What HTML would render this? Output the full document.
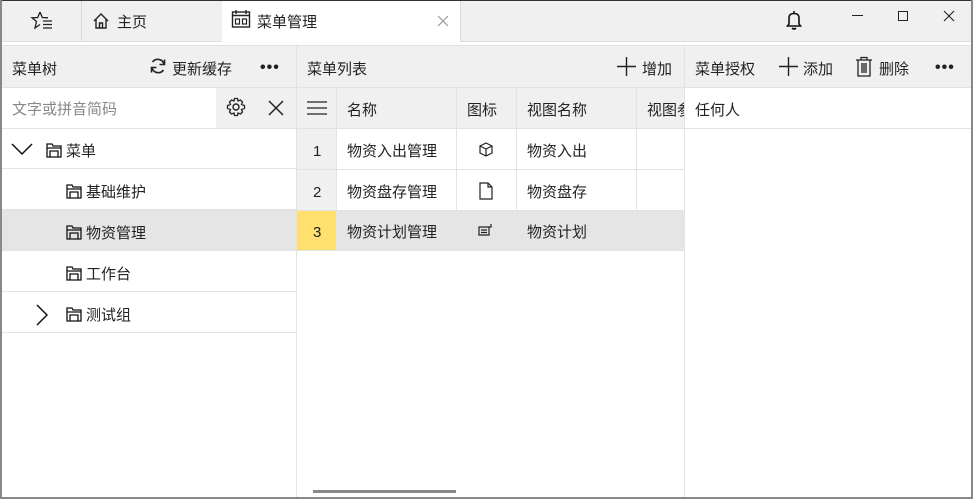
<!DOCTYPE html><html><head><meta charset="utf-8"><style>
*{box-sizing:border-box;margin:0;padding:0}
body{width:973px;height:499px;overflow:hidden;background:#fff;font-family:"Liberation Sans","Noto Sans CJK SC",sans-serif;font-size:15px;color:#222;position:relative}
.a{position:absolute}
.t{position:absolute;white-space:nowrap;line-height:20px;margin-top:2px}
.hl{position:absolute;height:1px;background:#e2e2e2}
.vl{position:absolute;width:1px;background:#e2e2e2}
</style></head><body>
<div class="a" style="left:0;top:0;width:973px;height:41px;background:#f0f0f0"></div>
<div class="a" style="left:0;top:0;width:973px;height:1px;background:#333"></div>
<div class="a" style="left:222px;top:1px;width:238px;height:41px;background:#fff"></div>
<div class="vl" style="left:81px;top:1px;height:40px;background:#d8d8d8"></div>
<div class="vl" style="left:460px;top:1px;height:40px;background:#d8d8d8"></div>
<div class="hl" style="left:0;top:41px;width:222px;background:#ddd"></div>
<div class="hl" style="left:460px;top:41px;width:513px;background:#ddd"></div>
<svg class="a" style="left:30px;top:10px" width="24" height="22" viewBox="0 0 24 22"><path d="M10 2 L12.3 7.5 L18 7.8 M10 2 L7.7 7.5 L2 7.8 L6.5 11.5 L5 18 L10 14.5" fill="none" stroke="#222" stroke-width="1.3"/><path d="M13 11h9M13 14.5h9M13 18h9" stroke="#222" stroke-width="1.3"/></svg>
<svg class="a" style="left:92px;top:12px" width="18" height="18" viewBox="0 0 18 18"><path d="M2 9 L9 2 L16 9 M4 7.5 V16 H14 V7.5 M7.5 16 V11 H10.5 V16" fill="none" stroke="#222" stroke-width="1.4"/></svg>
<div class="t" style="left:117px;top:11px">主页</div>
<svg class="a" style="left:231px;top:9px" width="20" height="20" viewBox="0 0 20 20"><rect x="1.5" y="3" width="17" height="15" fill="none" stroke="#222" stroke-width="1.4"/><path d="M1.5 6.5h17M5 1v4M15 1v4" stroke="#222" stroke-width="1.4"/><rect x="4.5" y="10" width="4" height="5" fill="none" stroke="#222" stroke-width="1.2"/><rect x="11.5" y="10" width="4" height="5" fill="none" stroke="#222" stroke-width="1.2"/></svg>
<div class="t" style="left:257px;top:11px">菜单管理</div>
<svg class="a" style="left:437px;top:15px" width="12" height="12"><path d="M1 1L11 11M11 1L1 11" stroke="#999" stroke-width="1.2"/></svg>
<svg class="a" style="left:785px;top:9px" width="18" height="22" viewBox="0 0 18 22"><path d="M9 2 V4 M4 15 V9 Q4 4.5 9 4.5 Q14 4.5 14 9 V15 L15.5 17 H2.5 L4 15 Z M7 19 Q9 21 11 19" fill="none" stroke="#111" stroke-width="1.6"/></svg>
<div class="a" style="left:852px;top:15px;width:11px;height:1px;background:#222"></div>
<div class="a" style="left:898px;top:11px;width:10px;height:10px;border:1px solid #222"></div>
<svg class="a" style="left:943px;top:10px" width="12" height="12"><path d="M1 1L11 11M11 1L1 11" stroke="#222" stroke-width="1.1"/></svg>
<div class="a" style="left:0;top:45px;width:973px;height:43px;background:#f0f0f0"></div>
<div class="hl" style="left:0;top:45px;width:973px"></div>
<div class="hl" style="left:0;top:87px;width:973px"></div>
<div class="t" style="left:12px;top:58px">菜单树</div>
<svg class="a" style="left:149px;top:57px" width="18" height="18" viewBox="0 0 18 18"><path d="M15 7 A6.5 6.5 0 0 0 3.5 5 M3 11 A6.5 6.5 0 0 0 14.5 13" fill="none" stroke="#222" stroke-width="1.6"/><path d="M15.5 2.5 V7.5 H10.5 M2.5 15.5 V10.5 H7.5" fill="none" stroke="#222" stroke-width="1.6"/></svg>
<div class="t" style="left:172px;top:58px">更新缓存</div>
<div class="t" style="left:260px;top:56px;font-size:16px;letter-spacing:1px;font-weight:bold">•••</div>
<div class="vl" style="left:296px;top:45px;height:454px"></div>
<div class="t" style="left:307px;top:58px">菜单列表</div>
<svg class="a" style="left:617px;top:57px" width="19" height="19"><path d="M9.5 0V19M0 9.5H19" stroke="#222" stroke-width="1.4"/></svg>
<div class="t" style="left:642px;top:58px">增加</div>
<div class="vl" style="left:684px;top:45px;height:454px"></div>
<div class="t" style="left:695px;top:58px">菜单授权</div>
<svg class="a" style="left:779px;top:57px" width="19" height="19"><path d="M9.5 0V19M0 9.5H19" stroke="#222" stroke-width="1.4"/></svg>
<div class="t" style="left:803px;top:58px">添加</div>
<svg class="a" style="left:855px;top:56px" width="18" height="21" viewBox="0 0 18 21"><path d="M1 4H17M6 4V1.5H12V4M3 4V20H15V4M7 7V17M9 7V17M11 7V17" fill="none" stroke="#222" stroke-width="1.3"/></svg>
<div class="t" style="left:879px;top:58px">删除</div>
<div class="t" style="left:935px;top:56px;font-size:16px;letter-spacing:1px;font-weight:bold">•••</div>
<div class="a" style="left:216px;top:88px;width:80px;height:40px;background:#f0f0f0"></div>
<div class="t" style="left:12px;top:98px;color:#888">文字或拼音简码</div>
<svg class="a" style="left:226px;top:97px" width="20" height="20" viewBox="0 0 20 20"><circle cx="10" cy="10" r="3" fill="none" stroke="#222" stroke-width="1.4"/><path d="M8.5 1.5H11.5L12 4L14.5 3L16.5 5L15.5 7.5L18.5 8.5V11.5L15.5 12.5L16.5 15L14.5 17L12 16L11.5 18.5H8.5L8 16L5.5 17L3.5 15L4.5 12.5L1.5 11.5V8.5L4.5 7.5L3.5 5L5.5 3L8 4Z" fill="none" stroke="#222" stroke-width="1.3"/></svg>
<svg class="a" style="left:268px;top:100px" width="16" height="16"><path d="M1 1L15 15M15 1L1 15" stroke="#222" stroke-width="1.5"/></svg>
<div class="hl" style="left:0;top:128px;width:296px"></div>
<div class="a" style="left:2px;top:209px;width:294px;height:41px;background:#e5e5e5"></div>
<div class="hl" style="left:0;top:168px;width:296px"></div>
<div class="hl" style="left:0;top:209px;width:296px"></div>
<div class="hl" style="left:0;top:250px;width:296px"></div>
<div class="hl" style="left:0;top:291px;width:296px"></div>
<div class="hl" style="left:0;top:332px;width:296px"></div>
<svg class="a" style="left:11px;top:143px" width="22" height="14"><path d="M1 1L11 11L21 1" fill="none" stroke="#111" stroke-width="1.5"/></svg>
<svg class="a" style="left:36px;top:304px" width="12" height="22"><path d="M1 1L11 11L1 21" fill="none" stroke="#111" stroke-width="1.5"/></svg>
<svg width="0" height="0" style="position:absolute"><defs><g id="fo"><path d="M1 14V1H6L7 3H15V14ZM1 5H15M4 14V8H12V14" fill="none" stroke="#111" stroke-width="1.3"/></g></defs></svg>
<svg class="a" style="left:46px;top:143px" width="16" height="15"><use href="#fo"/></svg>
<div class="t" style="left:66px;top:140px">菜单</div>
<svg class="a" style="left:66px;top:184px" width="16" height="15"><use href="#fo"/></svg>
<div class="t" style="left:86px;top:181px">基础维护</div>
<svg class="a" style="left:66px;top:225px" width="16" height="15"><use href="#fo"/></svg>
<div class="t" style="left:86px;top:222px">物资管理</div>
<svg class="a" style="left:66px;top:266px" width="16" height="15"><use href="#fo"/></svg>
<div class="t" style="left:86px;top:263px">工作台</div>
<svg class="a" style="left:66px;top:307px" width="16" height="15"><use href="#fo"/></svg>
<div class="t" style="left:86px;top:304px">测试组</div>
<div class="a" style="left:297px;top:88px;width:387px;height:40px;background:#f0f0f0"></div>
<div class="a" style="left:297px;top:128px;width:40px;height:82px;background:#f0f0f0"></div>
<div class="a" style="left:297px;top:210px;width:387px;height:40px;background:#e5e5e5"></div>
<div class="a" style="left:297px;top:210px;width:40px;height:40px;background:#ffe06e"></div>
<div class="hl" style="left:297px;top:128px;width:387px"></div>
<div class="hl" style="left:297px;top:169px;width:387px"></div>
<div class="hl" style="left:297px;top:210px;width:387px"></div>
<div class="hl" style="left:297px;top:250px;width:387px"></div>
<div class="vl" style="left:336px;top:88px;height:162px"></div>
<div class="vl" style="left:456px;top:88px;height:162px"></div>
<div class="vl" style="left:516px;top:88px;height:162px"></div>
<div class="vl" style="left:636px;top:88px;height:162px"></div>
<svg class="a" style="left:307px;top:101px" width="20" height="14"><path d="M0 1H20M0 7H20M0 13H20" stroke="#222" stroke-width="1.3"/></svg>
<div class="t" style="left:347px;top:99px">名称</div>
<div class="t" style="left:467px;top:99px">图标</div>
<div class="t" style="left:527px;top:99px">视图名称</div>
<div class="a" style="left:637px;top:88px;width:47px;height:40px;overflow:hidden"><div class="t" style="left:10px;top:11px">视图参数</div></div>
<div class="t" style="left:313px;top:140px">1</div>
<div class="t" style="left:313px;top:181px">2</div>
<div class="t" style="left:313px;top:221px">3</div>
<div class="t" style="left:347px;top:140px">物资入出管理</div>
<div class="t" style="left:347px;top:181px">物资盘存管理</div>
<div class="t" style="left:347px;top:221px">物资计划管理</div>
<svg class="a" style="left:479px;top:142px" width="14" height="15" viewBox="0 0 14 15"><path d="M7 1L13 4V11L7 14L1 11V4ZM1 4L7 7L13 4M7 7V14" fill="none" stroke="#222" stroke-width="1.2"/></svg>
<svg class="a" style="left:479px;top:182px" width="14" height="18" viewBox="0 0 14 18"><path d="M1 1H9L13 5V17H1ZM9 1V5H13" fill="none" stroke="#222" stroke-width="1.2"/></svg>
<svg class="a" style="left:478px;top:223px" width="16" height="14" viewBox="0 0 16 14"><path d="M1 4H11V12H1ZM3 7H9M3 9.5H9M11 4H13V1" fill="none" stroke="#222" stroke-width="1.2"/></svg>
<div class="t" style="left:527px;top:140px">物资入出</div>
<div class="t" style="left:527px;top:181px">物资盘存</div>
<div class="t" style="left:527px;top:221px">物资计划</div>
<div class="a" style="left:313px;top:490px;width:143px;height:3px;background:#888"></div>
<div class="t" style="left:695px;top:99px">任何人</div>
<div class="hl" style="left:685px;top:128px;width:288px"></div>
<div class="a" style="left:0;top:0;width:2px;height:499px;background:#888"></div>
<div class="a" style="left:971px;top:0;width:2px;height:499px;background:#888"></div>
<div class="a" style="left:0;top:497px;width:973px;height:2px;background:#888"></div>
</body></html>
